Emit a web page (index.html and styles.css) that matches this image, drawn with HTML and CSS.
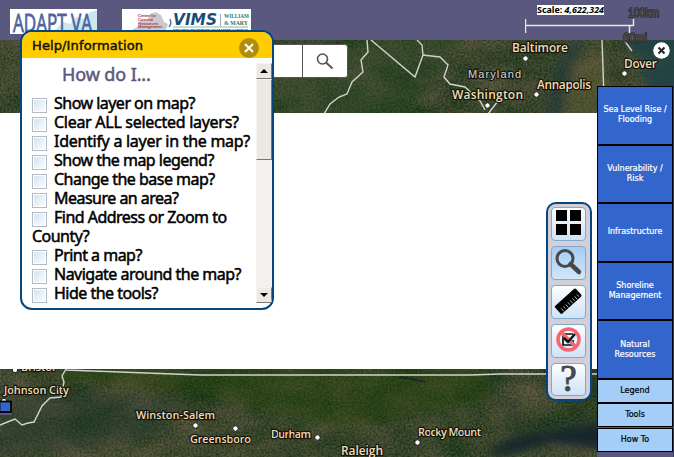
FILE: index.html
```html
<!DOCTYPE html>
<html lang="en">
<head>
<meta charset="utf-8">
<title>AdaptVA</title>
<link rel="stylesheet" href="styles.css">
</head>
<body>
<svg class="map" width="674" height="457" viewBox="0 0 674 457">
  <defs>
    <filter id="terrain" x="0" y="0" width="100%" height="100%" color-interpolation-filters="sRGB">
      <feTurbulence type="fractalNoise" baseFrequency="0.5" numOctaves="3" seed="4" result="fine"/>
      <feColorMatrix in="fine" type="matrix" values="0.55 0 0 0 -0.05  0.5 0 0 0 0.01  0.45 0 0 0 -0.05  0 0 0 0 1" result="grain"/>
      <feTurbulence type="fractalNoise" baseFrequency="0.018 0.03" numOctaves="4" seed="9" result="broad"/>
      <feColorMatrix in="broad" type="matrix" values="0.6 0 0 0 -0.08  0.28 0 0 0 0.13  0.35 0 0 0 -0.02  0 0 0 0 1" result="tone"/>
      <feComposite in="grain" in2="tone" operator="arithmetic" k1="0" k2="0.52" k3="0.52" k4="0"/>
    </filter>
    <filter id="soft" x="-30%" y="-30%" width="160%" height="160%"><feGaussianBlur stdDeviation="5"/></filter>
    <clipPath id="north"><rect y="40" width="674" height="73"/></clipPath>
    <clipPath id="south"><rect y="369" width="674" height="88"/></clipPath>
  </defs>
  <rect width="674" height="457" fill="#fff"/>
  <g clip-path="url(#north)">
    <rect y="40" width="674" height="73" filter="url(#terrain)"/>
    <g filter="url(#soft)">
      <path d="M270 30H470L400 120H270Z" fill="#1d4210" opacity=".35"/>
      <path d="M543 120L552 75 568 40H585L560 120Z" fill="#22363a" opacity=".6"/>
      <path d="M565 100L575 60 600 50 615 120H570Z" fill="#776a40" opacity=".4"/>
      <path d="M618 36L640 60 650 120H690V30Z" fill="#1f4244" opacity=".85"/>
    </g>
    <g class="border">
      <path d="M367 40L368 52 361 60 363 72 352 82 347 94 339 97 330 104 324 114M371 40L415 77 423 55 440 57 448 65 444 77 450 84 465 87 480 101 485 110M423 55L422 45 417 40M498 101L488 114"/>
      <path d="M602 40L604.500 113M624 40L632 51"/>
    </g>
    <g class="pins"><circle cx="525.500" cy="58.500" r="2.700"/><circle cx="624.500" cy="73.500" r="2.700"/><circle cx="536.500" cy="94.500" r="2.700"/><circle cx="487.500" cy="105.500" r="2.700"/></g>
    <g class="place big">
      <text x="512" y="52" textLength="56">Baltimore</text>
      <text x="624" y="68" textLength="33">Dover</text>
      <text x="537" y="89" textLength="54">Annapolis</text>
      <text x="452" y="99" textLength="71">Washington</text>
      <text class="state" x="468" y="78" textLength="53">Maryland</text>
    </g>
  </g>
  <g clip-path="url(#south)">
    <rect y="369" width="674" height="88" filter="url(#terrain)"/>
    <g filter="url(#soft)">
      <path d="M60 360H490V400L340 430 200 395 60 380Z" fill="#1a400a" opacity=".4"/>
      <path d="M0 400L60 390 190 400 150 440 0 457Z" fill="#24382c" opacity=".4"/>
      <path d="M485 452L515 437 550 430 605 420V450L550 443 500 457Z" fill="#15282c"/>
      <path d="M512 400L515 425 522 435 517 412Z" fill="#1a2c2c"/>
      <path d="M530 360H600V395L555 385Z" fill="#15332a" opacity=".8"/>
    </g>
    <g class="border">
      <path d="M66 369L62 376 64 382 61 397 50 398 42 406 34 422 28 423 22 425 15 419 10 421 0 425M66 370L200 375 470 375 500 374 600 374"/>
    </g>
    <path d="M400 377L426 382" stroke="#17262a" stroke-width="1.500"/>
    <g class="pins"><circle cx="15" cy="370" r="2.700"/><circle cx="4" cy="401" r="2.700"/><circle cx="195.500" cy="425.500" r="2.700"/><circle cx="235.500" cy="428.500" r="2.700"/><circle cx="317.500" cy="437.500" r="2.700"/><circle cx="417.500" cy="442.500" r="2.700"/></g>
    <g class="place">
      <text x="21" y="371" textLength="34">Bristol</text>
      <text x="4" y="394" textLength="65">Johnson City</text>
      <text x="136" y="419" textLength="79">Winston-Salem</text>
      <text x="190" y="443" textLength="61">Greensboro</text>
      <text x="271" y="438" textLength="40">Durham</text>
      <text x="418" y="436" textLength="63">Rocky Mount</text>
      <text class="capital" x="341" y="455" textLength="42">Raleigh</text>
    </g>
    <rect y="412" width="12" height="3" fill="#5a587e"/>
    <rect x="-.5" y="401.500" width="11.500" height="10.500" fill="#3366cc" stroke="#000" stroke-width="1.800"/>
  </g>
</svg>

<header class="topbar">
  <svg class="logo-adapt" width="87" height="25" viewBox="0 0 87 25">
    <rect width="87" height="25" fill="#fff"/>
    <path d="M41 25L53 13 60 15 66 8 74 10 80 3 87 1V25Z" fill="#cde5ef"/>
    <text x="3" y="22.500" textLength="79" lengthAdjust="spacingAndGlyphs">ADAPT VA</text>
  </svg>
  <svg class="logo-vims" width="129" height="25" viewBox="0 0 129 25">
    <rect width="129" height="25" fill="#fff"/>
    <path d="M10 21L17 17 18 11 25 12 28 5 34 3 39 6 42 13 46 15 43 24H8Z" fill="#cbc9cd"/>
    <path d="M47 18Q50 15 48 10" fill="none" stroke="#497eaa" stroke-width="1.500"/>
    <g class="crm"><text x="16" y="8" textLength="18">Center for</text><text x="16" y="12" textLength="15">Coastal</text><text x="16" y="15.500" textLength="20">Resources</text><text x="16" y="19" textLength="24">Management</text></g>
    <text class="vims" x="51" y="16" textLength="44" lengthAdjust="spacingAndGlyphs">VIMS</text>
    <path d="M98.500 5V17" stroke="#68a" stroke-width=".7"/>
    <g class="wm"><text x="102" y="9" textLength="25" lengthAdjust="spacingAndGlyphs">WILLIAM</text><text x="102" y="16" textLength="24" lengthAdjust="spacingAndGlyphs">&amp; MARY</text></g>
    <path d="M51 18H126" stroke="#487" stroke-width=".6"/>
    <text class="inst" x="51" y="22.500" textLength="75" lengthAdjust="spacingAndGlyphs">VIRGINIA INSTITUTE OF MARINE SCIENCE</text>
  </svg>
</header>

<svg class="scalebar" width="140" height="46" viewBox="525 0 140 46">
  <rect x="537" y="5" width="67" height="10" fill="#fff"/>
  <text class="scale" x="537" y="13" textLength="67" lengthAdjust="spacingAndGlyphs">Scale: <tspan font-style="italic">4,622,324</tspan></text>
  <path d="M525.500 19V33M525.500 25.500H633.500M633.500 19V26M629.500 26V33" fill="none" stroke="#e8e8e4" stroke-width="1.500"/>
  <text class="unit" x="628" y="16.500" textLength="31" lengthAdjust="spacingAndGlyphs">100km</text>
  <text class="unit" x="623" y="41.500" textLength="24" lengthAdjust="spacingAndGlyphs">60mi</text>
</svg>

<form class="search">
  <span class="field"></span>
  <span class="go"><svg width="18" height="18" viewBox="0 0 18 18"><circle cx="6.500" cy="6" r="5" fill="none" stroke="#555" stroke-width="1.600"/><path d="M10 9.500L16.500 15.500" stroke="#555" stroke-width="2"/></svg></span>
</form>

<section class="help">
  <div class="help-head">
    <h2>Help/Information</h2>
    <svg width="20" height="20" viewBox="0 0 20 20"><circle cx="10" cy="10" r="10" fill="#b08e0c"/><path d="M6 6L14 14M14 6L6 14" stroke="#fff" stroke-width="2"/></svg>
  </div>
  <div class="help-body">
    <div class="questions">
      <h3>How do I...</h3>
      <p><i class="box"></i>Show layer on map?</p>
      <p class="loose"><i class="box"></i>Clear ALL selected layers?</p>
      <p class="loose"><i class="box"></i>Identify a layer in the map?</p>
      <p><i class="box"></i>Show the map legend?</p>
      <p><i class="box"></i>Change the base map?</p>
      <p><i class="box"></i>Measure an area?</p>
      <p><i class="box"></i>Find Address or Zoom to<br>County?</p>
      <p><i class="box"></i>Print a map?</p>
      <p><i class="box"></i>Navigate around the map?</p>
      <p><i class="box"></i>Hide the tools?</p>
    </div>
    <div class="scroll">
      <span class="arrow"><svg width="8" height="4" viewBox="0 0 8 4"><path d="M0 4L4 0 8 4Z"/></svg></span>
      <span class="thumb"></span>
      <span class="arrow end"><svg width="8" height="4" viewBox="0 0 8 4"><path d="M0 0L4 4 8 0Z"/></svg></span>
    </div>
  </div>
</section>

<nav class="toolbar">
  <span class="tool"><svg width="35" height="34" viewBox="0 0 35 34"><path d="M5 3H16V14H5ZM19 3H30V14H19ZM5 17H16V28H5ZM19 17H30V28H19Z"/></svg></span>
  <span class="tool active"><svg width="35" height="34" viewBox="0 0 35 34"><circle cx="14" cy="12.500" r="8" fill="none" stroke="#484848" stroke-width="3"/><path d="M19.500 18L28 26" stroke="#484848" stroke-width="4.500" stroke-linecap="round"/></svg></span>
  <span class="tool"><svg width="35" height="34" viewBox="0 0 35 34"><g transform="rotate(-42 17 16)"><rect x="3" y="11" width="28" height="10.500" rx="1.500"/><path d="M7 13V17M10 13V16M13 13V17M16 13V16M19 13V17M22 13V16M25 13V17M28 13V16" transform="translate(0 4)" stroke="#ddd" stroke-width=".8"/></g></svg></span>
  <span class="tool"><svg width="35" height="34" viewBox="0 0 35 34"><path d="M22 10H12V21H22V16" fill="none" stroke="#111" stroke-width="1.700"/><circle cx="17.500" cy="15.500" r="10.500" fill="none" stroke="#f46670" stroke-width="3.500"/><path d="M10 8L25 23" stroke="#f46670" stroke-width="3.500"/><path d="M13 14L17 18 24 10" fill="none" stroke="#111" stroke-width="2.500"/></svg></span>
  <span class="tool q">?</span>
</nav>

<svg class="close" width="17" height="17" viewBox="0 0 17 17"><circle cx="8.500" cy="8.500" r="8.300" fill="#fff"/><path d="M5.500 5.500L11.500 11.500M11.500 5.500L5.500 11.500" stroke="#222" stroke-width="2"/></svg>

<aside class="tabs">
  <div class="tab">Sea Level Rise /<br>Flooding</div>
  <div class="tab">Vulnerability /<br>Risk</div>
  <div class="tab">Infrastructure</div>
  <div class="tab">Shoreline<br>Management</div>
  <div class="tab">Natural<br>Resources</div>
  <div class="tab small">Legend</div>
  <div class="tab small">Tools</div>
  <div class="tab small last">How To</div>
</aside>
</body>
</html>
```
FILE: styles.css
```css
* { box-sizing: border-box; }
body { margin: 0; width: 674px; height: 457px; overflow: hidden; position: relative; background: #fff; font-family: "Open Sans", "Noto Sans", sans-serif; }
svg { display: block; }
.map { position: absolute; left: 0; top: 0; }
.border { fill: none; stroke: #d0d4cc; stroke-width: 1.4; }
.pins { fill: #fff; stroke: #222; stroke-width: 1; }
.place { font: 600 11px "Open Sans", sans-serif; fill: #f1dcb3; stroke: #15180f; stroke-width: 2.5px; paint-order: stroke; stroke-linejoin: round; }
.place.big { font-size: 12px; }
.place .capital { font-size: 12px; }
.place .state { font: 11px "Liberation Sans", sans-serif; fill: #d6d6d6; }

.topbar { position: relative; height: 40px; display: flex; align-items: flex-start; gap: 25px; padding: 9px 10px; background: #5a587e; }
.logo-adapt text { font: 25px "Open Sans", sans-serif; fill: #4c649f; stroke: #4c649f; stroke-width: .8px; }
.crm { font: 4px "Liberation Sans", sans-serif; fill: #a9505e; stroke: #a9505e; stroke-width: .2px; }
.vims { font: italic bold 16px "DejaVu Sans", sans-serif; fill: #174d78; }
.wm { font: bold 7px "Liberation Serif", serif; fill: #2a7771; }
.inst { font: bold 4px "Liberation Serif", serif; fill: #234; }

.scalebar { position: absolute; left: 525px; top: 0; }
.scale { font: bold 9px "Noto Sans", sans-serif; }
.unit { font: 12px "Liberation Sans", sans-serif; fill: #505050; stroke: #2a2a2a; stroke-width: 1.3px; paint-order: stroke; }

.search { position: absolute; left: 80px; top: 44px; width: 268px; height: 34px; display: flex; background: #fff; border: 1px solid #555; border-radius: 3px; }
.field { flex: 1; }
.go { width: 45px; border-left: 1px solid #555; padding: 8px 13px; }

.help { position: absolute; left: 20px; top: 30px; width: 254px; height: 280px; border: 2px solid #034680; border-radius: 12px; background: #fff; overflow: hidden; }
.help-head { height: 26px; background: #ffcd00; display: flex; justify-content: space-between; padding: 6px 13px 0 10px; }
.help-head h2 { margin: 0; font: 13px/15px "DejaVu Sans", sans-serif; letter-spacing: .12px; color: #111; -webkit-text-stroke: .45px #111; }
.help-body { display: flex; justify-content: space-between; padding-top: 5px; }
.questions { padding-left: 10px; white-space: nowrap; }
.questions h3 { margin: 0 0 9px 30px; font: 18px/22px "Noto Sans", sans-serif; letter-spacing: -.1px; color: #5a587e; -webkit-text-stroke: .5px #5a587e; }
.questions p { margin: 0; font: 16px/19px "Noto Sans", sans-serif; letter-spacing: -.52px; color: #000; -webkit-text-stroke: .5px #000; }
.questions .loose { letter-spacing: -.28px; }
.box { display: inline-block; vertical-align: -5px; width: 15px; height: 15px; margin: -3px 7px -3px 0; border: 1px solid #b4b9c8; background: linear-gradient(135deg, #cfe2ee, #fff); box-shadow: inset 0 0 0 1px #fff; position: relative; top: 0; }
.box { margin-bottom: 0; margin-top: -3px; vertical-align: -4px; }
.scroll { width: 16px; height: 240px; display: flex; flex-direction: column; background: #f3f1ee; }
.arrow, .thumb { background: #ece9e2; border: 1px solid; border-color: #f6f4ef #777 #777 #f6f4ef; }
.arrow { height: 16px; display: flex; align-items: center; justify-content: center; }
.thumb { height: 81px; }
.end { margin-top: auto; }

.toolbar { position: absolute; left: 546px; top: 202px; width: 46px; height: 199px; border: 2px solid #034680; border-radius: 10px; background: #d2cfd8; display: flex; flex-direction: column; gap: 5px; padding: 3px 3px; }
.tool { height: 34px; width: 35px; border: 1px solid #7faacb; border-radius: 4px; background: linear-gradient(#fff, #e5effa 50%, #cfe3f8); }
.tool svg { margin: -1px; }
.active { background: linear-gradient(#a5cdf3, #d2e6fa); }
.q { font: 37px/29px "Liberation Serif", serif; color: #484848; text-align: center; -webkit-text-stroke: 1px #484848; }
.close { position: absolute; left: 653px; top: 42px; }

.tabs { position: absolute; left: 597px; top: 86px; width: 77px; height: 371px; background: #5a587e; border-right: 1px solid #27466e; }
.tab { width: 76px; height: 58.6px; display: flex; align-items: center; justify-content: center; text-align: center; background: #3366cc; border: 1px solid #000; color: #fff; font: 8px/10px "DejaVu Sans", sans-serif; -webkit-text-stroke: .2px currentColor; }
.tab.small { height: 24px; background: #a4cef7; color: #000; }
.tab.last { margin-top: 1px; }
```
